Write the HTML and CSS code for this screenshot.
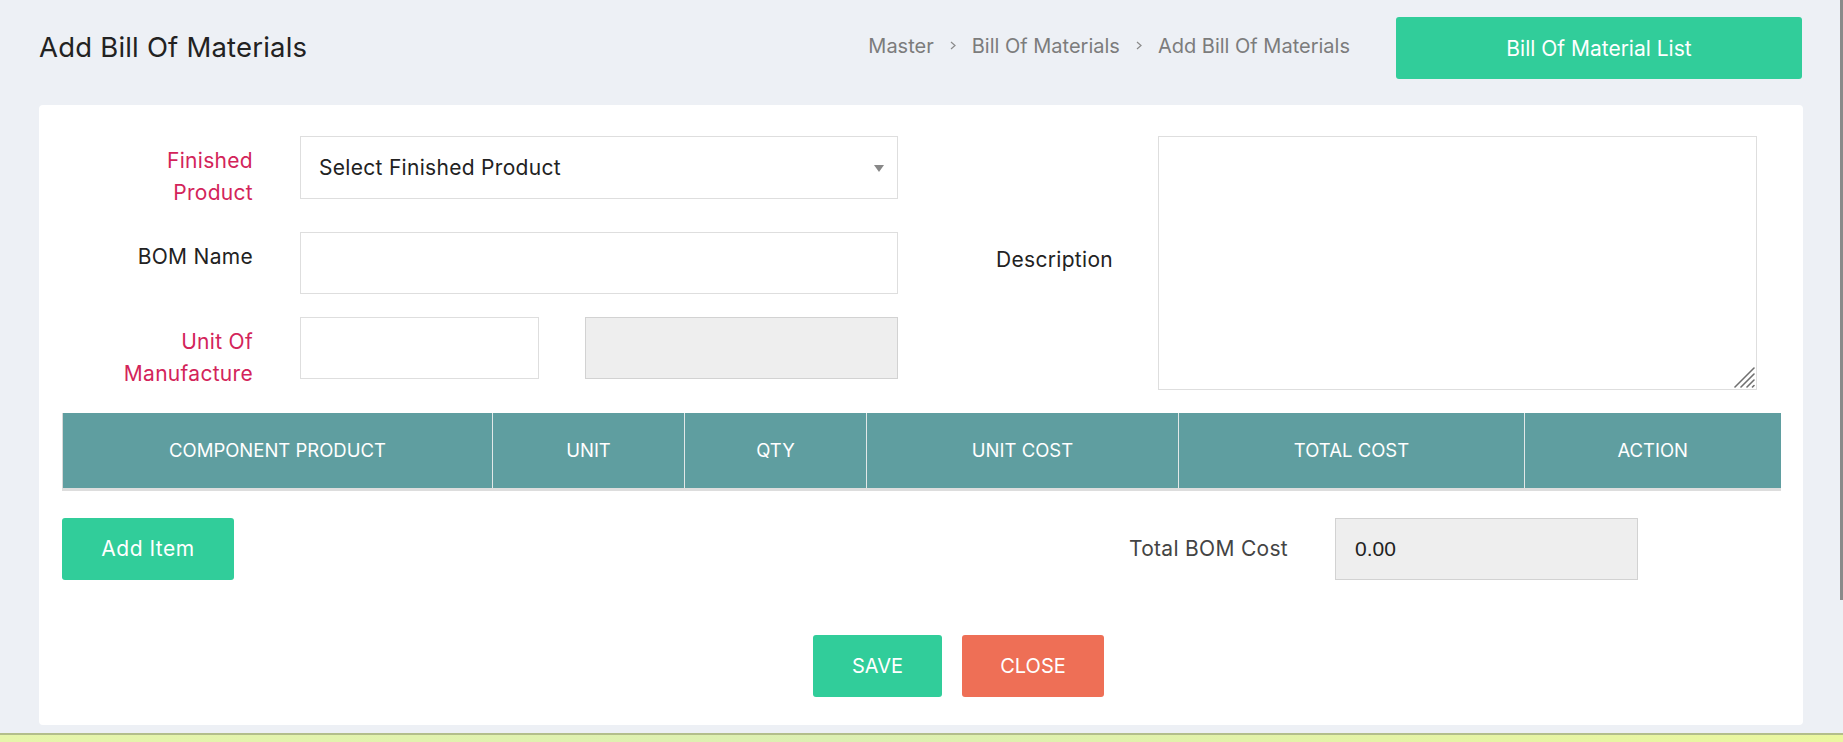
FILE: index.html
```html
<!DOCTYPE html>
<html lang="en">
<head>
<meta charset="utf-8">
<title>Add Bill Of Materials</title>
<link rel="stylesheet" href="styles.css">
</head>
<body>
<div class="page">
  <header class="page-head">
    <h1 class="page-title">Add Bill Of Materials</h1>
    <nav class="crumbs">
      <span>Master</span>
      <svg class="chev" viewBox="0 0 6 9" width="6" height="9"><polyline points="1,1 5,4.5 1,8" fill="none" stroke="#8a8a8a" stroke-width="1.2"/></svg>
      <span>Bill Of Materials</span>
      <svg class="chev" viewBox="0 0 6 9" width="6" height="9"><polyline points="1,1 5,4.5 1,8" fill="none" stroke="#8a8a8a" stroke-width="1.2"/></svg>
      <span>Add Bill Of Materials</span>
    </nav>
    <button class="btn btn-green btn-list" type="button">Bill Of Material List</button>
  </header>

  <section class="card">
    <div class="form-top">
      <div class="form-left">
        <div class="f-row">
          <label class="f-label req">Finished Product</label>
          <div class="select-wrap">
            <select class="f-select">
              <option>Select Finished Product</option>
            </select>
            <span class="select-arrow"></span>
          </div>
        </div>
        <div class="f-row">
          <label class="f-label">BOM Name</label>
          <input class="f-input f-wide" type="text">
        </div>
        <div class="f-row">
          <label class="f-label req">Unit Of Manufacture</label>
          <div class="unit-pair">
            <input class="f-input f-unit" type="text">
            <input class="f-input f-disabled f-unit-name" type="text" disabled>
          </div>
        </div>
      </div>
      <div class="form-right">
        <label class="f-label desc-label">Description</label>
        <div class="textarea-wrap">
          <textarea class="f-textarea"></textarea>
          <svg class="grip" viewBox="0 0 22 22" width="22" height="22">
            <g stroke="#707070" stroke-width="1.6" stroke-linecap="round">
              <line x1="2" y1="21" x2="21" y2="2"/>
              <line x1="8" y1="21" x2="21" y2="8"/>
              <line x1="14" y1="21" x2="21" y2="14"/>
              <line x1="19.5" y1="21" x2="21" y2="19.5"/>
            </g>
          </svg>
        </div>
      </div>
    </div>

    <table class="bom-table">
      <thead>
        <tr>
          <th class="c1">COMPONENT PRODUCT</th>
          <th class="c2">UNIT</th>
          <th class="c3">QTY</th>
          <th class="c4">UNIT COST</th>
          <th class="c5">TOTAL COST</th>
          <th class="c6">ACTION</th>
        </tr>
      </thead>
    </table>

    <div class="item-row">
      <button class="btn btn-green btn-add" type="button">Add Item</button>
      <div class="total-group">
        <span class="total-label">Total BOM Cost</span>
        <input class="f-input f-disabled f-total" type="text" value="0.00" readonly>
      </div>
    </div>

    <div class="action-row">
      <button class="btn btn-green btn-save" type="button">SAVE</button>
      <button class="btn btn-red btn-close" type="button">CLOSE</button>
    </div>
  </section>

  <div class="foot-strip"></div>
</div>
<div class="scroll-thumb"></div>
</body>
</html>
```

FILE: styles.css
```css
* { box-sizing: border-box; }

html, body {
  margin: 0;
  padding: 0;
  background: #edf0f5;
  font-family: "Inter", "Noto Sans", "Liberation Sans", sans-serif;
  color: #222;
  overflow: hidden;
}

.page {
  width: 1843px;
  height: 742px;
  display: flex;
  flex-direction: column;
  padding-top: 17px;
}

.page-head {
  display: flex;
  align-items: center;
  height: 62px;
  padding: 0 41px 0 39px;
}

.page-title {
  flex: 1;
  margin: 0;
  margin-top: -2px;
  font-size: 27.5px;
  font-weight: 400;
  color: #222;
  letter-spacing: 0.2px;
}

.crumbs {
  display: flex;
  align-items: center;
  margin-right: 46px;
  margin-top: -5px;
  font-size: 20px;
  color: #7c7c7c;
}

.chev { margin: 0 16px; }

.btn {
  border: none;
  border-radius: 3px;
  color: #fff;
  font-family: inherit;
  font-size: 21px;
  font-weight: 400;
  height: 62px;
  padding: 0;
  cursor: pointer;
}

.btn-green { background: #31cd9a; }
.btn-red { background: #ee6f56; }

.btn-list { width: 406px; }

.card {
  margin: 26px 40px 0 39px;
  height: 620px;
  background: #fff;
  border-radius: 4px;
  padding: 31px 23px 29px 23px;
}

.form-top {
  display: flex;
}

.form-left {
  display: flex;
  flex-direction: column;
  gap: 23px;
}

.f-row {
  display: flex;
  gap: 47px;
  align-items: flex-start;
}

.f-label {
  width: 191px;
  padding-left: 41px;
  padding-top: 9px;
  text-align: right;
  font-size: 21px;
  letter-spacing: 0.3px;
  line-height: 32px;
  color: #222;
}

.f-label.req { color: #d3245a; }

.select-wrap {
  position: relative;
  width: 598px;
  height: 63px;
}

.f-select {
  appearance: none;
  -webkit-appearance: none;
  width: 100%;
  height: 100%;
  border: 1px solid #dedede;
  border-radius: 0;
  background: #fff;
  padding: 0 18px;
  font-family: inherit;
  font-size: 21px;
  letter-spacing: 0.3px;
  color: #222;
}

.select-arrow {
  position: absolute;
  right: 14px;
  top: 29px;
  width: 0;
  height: 0;
  border-left: 5px solid transparent;
  border-right: 5px solid transparent;
  border-top: 7px solid #888;
}

.f-input {
  height: 62px;
  border: 1px solid #dedede;
  border-radius: 0;
  background: #fff;
  padding: 0 19px;
  font-family: "Liberation Sans", Arial, sans-serif;
  font-size: 21px;
  color: #222;
}

.f-wide { width: 598px; }

.unit-pair {
  display: flex;
  gap: 46px;
}

.f-unit { width: 239px; }
.f-unit-name { width: 313px; }

.f-disabled {
  background: #eeeeee;
  border-color: #d2d2d2;
}

.form-right {
  display: flex;
  align-items: center;
}

.desc-label {
  width: 215px;
  padding: 0 0 7px 0;
  margin-right: 45px;
  color: #222;
}

.textarea-wrap {
  position: relative;
  width: 599px;
  height: 254px;
  margin-top: -1px;
}

.f-textarea {
  display: block;
  width: 100%;
  height: 100%;
  border: 1px solid #dedede;
  border-radius: 0;
  resize: none;
  font-family: inherit;
  font-size: 20px;
}

.grip {
  position: absolute;
  right: 2px;
  bottom: 2px;
}

.bom-table {
  width: 1718px;
  margin-top: 23px;
  border-collapse: collapse;
  table-layout: fixed;
  border-left: 1px solid #d8d8d8;
}

.bom-table th {
  height: 76px;
  background: #5f9ea0;
  color: #fff;
  font-weight: 400;
  font-size: 18.5px;
  text-align: center;
  vertical-align: middle;
  padding: 0;
  border-right: 1px solid #e2e8e8;
  border-bottom: 3px solid #dddddd;
}

.bom-table th:last-child { border-right: none; }

.c1 { width: 430px; }
.c2 { width: 192px; }
.c3 { width: 182px; }
.c4 { width: 312px; }
.c5 { width: 346px; }
.c6 { width: 256px; }

.item-row {
  display: flex;
  align-items: center;
  margin-top: 27px;
}

.btn-add { width: 172px; letter-spacing: 0.5px; }

.total-group {
  display: flex;
  align-items: center;
  margin-left: auto;
  margin-right: 142px;
  gap: 47px;
}

.total-label {
  font-size: 21px;
  letter-spacing: 0.3px;
  color: #444;
}

.f-total { width: 303px; }

.action-row {
  display: flex;
  gap: 20px;
  margin-top: 55px;
  padding-left: 751px;
}

.btn-save, .btn-close { font-size: 20px; }
.btn-save { width: 129px; }
.btn-close { width: 142px; }

.foot-strip {
  margin-top: 8px;
  height: 9px;
  border-top: 2px solid #b3be8b;
  background: linear-gradient(90deg, #e6f5aa 0%, #dcefb2 45%, #e4f3a6 75%, #eaf79f 100%);
}

.scroll-thumb {
  position: fixed;
  top: 0;
  right: 0;
  width: 3px;
  height: 600px;
  background: #8a8a8a;
}
```
